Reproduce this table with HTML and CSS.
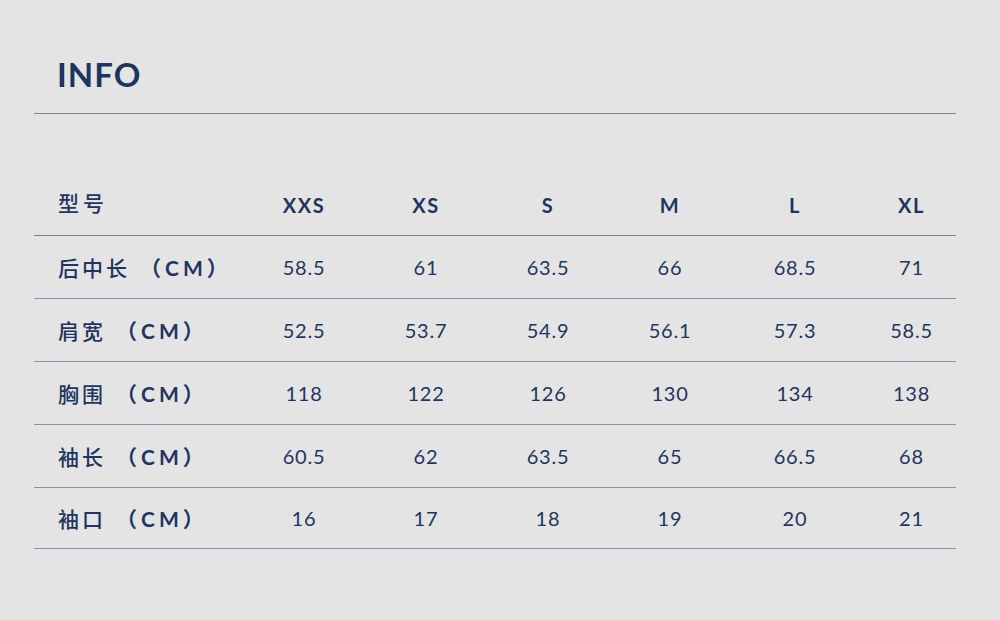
FILE: index.html
```html
<!DOCTYPE html>
<html lang="zh">
<head>
<meta charset="utf-8">
<link rel="stylesheet" href="styles.css">
</head>
<body>
<div class="page">
  <h1 class="title">INFO</h1>
  <div class="table">
    <div class="row head">
      <div class="label">型号</div>
      <div class="cell">XXS</div><div class="cell">XS</div><div class="cell">S</div><div class="cell">M</div><div class="cell">L</div><div class="cell">XL</div>
    </div>
    <div class="row">
      <div class="label">后中长<span class="unit">（CM）</span></div>
      <div class="cell">58.5</div><div class="cell">61</div><div class="cell">63.5</div><div class="cell">66</div><div class="cell">68.5</div><div class="cell">71</div>
    </div>
    <div class="row">
      <div class="label">肩宽<span class="unit">（CM）</span></div>
      <div class="cell">52.5</div><div class="cell">53.7</div><div class="cell">54.9</div><div class="cell">56.1</div><div class="cell">57.3</div><div class="cell">58.5</div>
    </div>
    <div class="row">
      <div class="label">胸围<span class="unit">（CM）</span></div>
      <div class="cell">118</div><div class="cell">122</div><div class="cell">126</div><div class="cell">130</div><div class="cell">134</div><div class="cell">138</div>
    </div>
    <div class="row">
      <div class="label">袖长<span class="unit">（CM）</span></div>
      <div class="cell">60.5</div><div class="cell">62</div><div class="cell">63.5</div><div class="cell">65</div><div class="cell">66.5</div><div class="cell">68</div>
    </div>
    <div class="row last">
      <div class="label">袖口<span class="unit">（CM）</span></div>
      <div class="cell">16</div><div class="cell">17</div><div class="cell">18</div><div class="cell">19</div><div class="cell">20</div><div class="cell">21</div>
    </div>
  </div>
</div>
</body>
</html>
```

FILE: styles.css
```css
html, body {
  margin: 0;
  padding: 0;
  background: #e4e4e4;
}
body {
  width: 1000px;
  height: 620px;
  overflow: hidden;
  color: #1f3560;
  font-family: Lato, "Noto Sans CJK SC", sans-serif;
}
.page {
  padding: 0 44px 0 34px;
}
.title {
  margin: 0;
  padding: 58px 0 0 23px;
  height: 114px;
  box-sizing: border-box;
  font-size: 33px;
  line-height: 1;
  font-weight: 700;
  letter-spacing: 1px;
  border-bottom: 1px solid #7c879d;
}
.table {
  display: flex;
  flex-direction: column;
}
.row {
  display: grid;
  grid-template-columns: 209px 122px 122px 122px 122px 128px 1fr;
  align-items: center;
  height: 63px;
  box-sizing: border-box;
  border-bottom: 1px solid #8792ad;
}
.row.last {
  height: 61px;
}
.row.head {
  height: 122px;
  align-items: end;
  padding-bottom: 18px;
  border-bottom-color: #7e8092;
}
.row.head .cell {
  font-size: 20px;
  font-weight: 700;
  letter-spacing: 1.5px;
}
.row.head .label {
  letter-spacing: 4px;
}
.label {
  padding-left: 24px;
  font-family: "Noto Sans CJK SC", sans-serif;
  font-size: 21px;
  font-weight: 500;
  letter-spacing: 3px;
}
.unit {
  font-family: Lato, "Noto Sans CJK SC", sans-serif;
  font-weight: 700;
  letter-spacing: 4px;
  margin-left: 10px;
}
.cell {
  text-align: center;
  font-size: 20px;
  letter-spacing: 0.8px;
}
.cell:last-child {
  padding-left: 8px;
}
```
